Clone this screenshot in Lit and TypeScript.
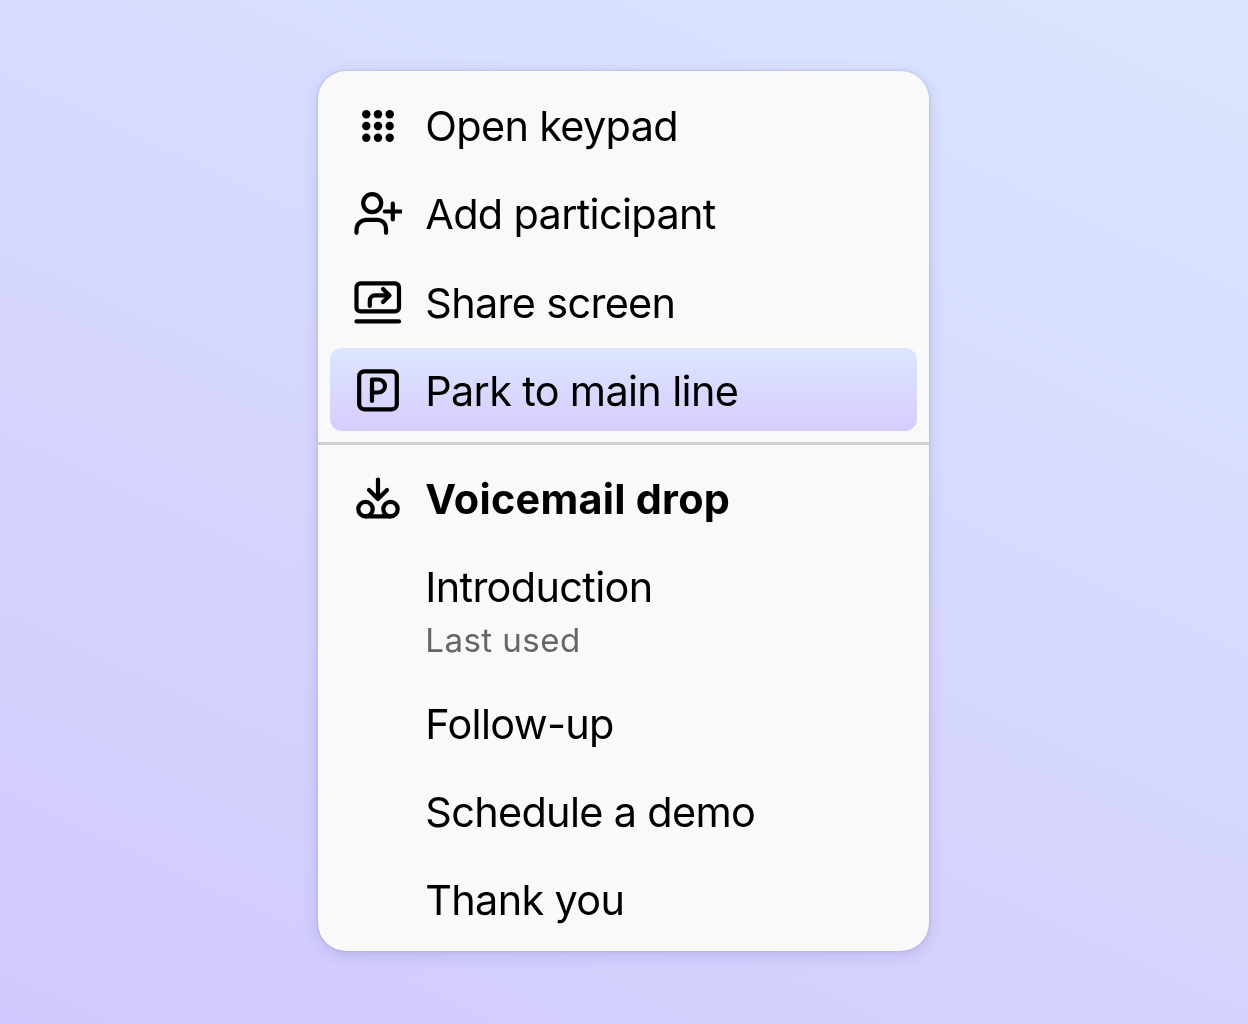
import { LitElement, html, css, svg } from "lit";
import { customElement } from "lit/decorators.js";

const icons = {
  keypad: svg`<g fill="currentColor" stroke="none" transform="translate(0 1)">
    ${[12.3, 24, 35.7].flatMap((y) =>
      [12.3, 24, 35.7].map((x) => svg`<circle cx=${x} cy=${y} r="4.2"></circle>`),
    )}
  </g>`,
  addUser: svg`<g transform="translate(0 0.8)">
    <circle cx="18.2" cy="13.3" r="9"></circle>
    <path d="M2.5 43v-3a10 10 0 0 1 10-10h11.5a8.5 8.5 0 0 1 8 8.5v4.5"></path>
    <path d="M30.8 21.7h16M38.8 13.7v16"></path>
  </g>`,
  share: svg`<g transform="translate(0 0.4)">
    <rect x="2.5" y="5" width="42.5" height="28" rx="4"></rect>
    <path d="M2.5 43H45"></path>
    <path d="M15.8 27.5v-5.5a5 5 0 0 1 5-5H35"></path>
    <path d="M29 10.5l6.5 6.5l-6.5 6.5"></path>
  </g>`,
  park: svg`<rect x="5.2" y="5.3" width="37.6" height="38" rx="5"></rect>
    <path d="M18 35V13.5h6.5a6.5 6.5 0 0 1 0 13H18"></path>`,
  voicemail: svg`<g transform="translate(0 1.1)">
    <path d="M24 4.5V23"></path>
    <path d="M15 15l9 9l9-9"></path>
    <circle cx="11.5" cy="34" r="7.2"></circle>
    <circle cx="36.5" cy="34" r="7.2"></circle>
    <path d="M11.5 41.2h25"></path>
  </g>`,
};

type IconName = keyof typeof icons;

interface MenuItem {
  label: string;
  icon?: IconName;
  sub?: string;
  active?: boolean;
  bold?: boolean;
}

const topItems: MenuItem[] = [
  { label: "Open keypad", icon: "keypad" },
  { label: "Add participant", icon: "addUser" },
  { label: "Share screen", icon: "share" },
  { label: "Park to main line", icon: "park", active: true },
];

const voicemailItems: MenuItem[] = [
  { label: "Voicemail drop", icon: "voicemail", bold: true },
  { label: "Introduction", sub: "Last used" },
  { label: "Follow-up" },
  { label: "Schedule a demo" },
  { label: "Thank you" },
];

@customElement("app-root")
export class AppRoot extends LitElement {
  static styles = css`
    :host {
      display: flex;
      justify-content: center;
      align-items: flex-start;
      box-sizing: border-box;
      height: 1024px;
      padding: 71px 1px 0 0;
      background: linear-gradient(205deg, #dbe6ff 0%, #d1c9fd 100%);
      font-family: Inter, "Liberation Sans", sans-serif;
      color: #000;
    }

    .menu {
      box-sizing: border-box;
      width: 611px;
      height: 880px;
      padding: 12.4px 12px 9.5px;
      background: #f9f9f9;
      border-radius: 28px;
      box-shadow:
        0 0 3px rgba(80, 80, 150, 0.3),
        0 4px 16px rgba(80, 80, 150, 0.18);
      will-change: transform;
    }

    .group {
      display: flex;
      flex-direction: column;
      gap: 5px;
    }

    .group.top {
      gap: 5.33px;
    }

    .divider {
      height: 3px;
      margin: 11px -12px;
      background: #cfcfcf;
    }

    .row {
      display: flex;
      align-items: center;
      gap: 23.5px;
      height: 83px;
      padding-left: 23.75px;
      border-radius: 12px;
    }

    .row.tall {
      height: 132px;
      align-items: flex-start;
    }

    .row.active {
      background: linear-gradient(180deg, #dce6ff 0%, #d6cdfe 100%);
    }

    .slot {
      flex: none;
      width: 48px;
      height: 48px;
    }

    svg {
      display: block;
      width: 48px;
      height: 48px;
      fill: none;
      stroke: currentColor;
      stroke-width: 4.2;
      stroke-linecap: round;
      stroke-linejoin: round;
    }

    .label {
      padding-top: 3.2px;
      font-size: 41.4px;
      line-height: 83px;
      letter-spacing: -0.66px;
      white-space: nowrap;
    }

    .row.tall .label {
      padding-top: 1.6px;
    }

    .row.bold .label {
      font-weight: 700;
      letter-spacing: 0.25px;
    }

    .sub {
      margin-top: -12.5px;
      font-size: 33.1px;
      line-height: 48px;
      letter-spacing: 0.45px;
      color: #666;
      white-space: nowrap;
    }
  `;

  private renderRow(item: MenuItem) {
    const classes = [
      "row",
      item.active ? "active" : "",
      item.bold ? "bold" : "",
      item.sub ? "tall" : "",
    ].join(" ");
    return html`
      <div class=${classes}>
        <div class="slot">
          ${item.icon
            ? html`<svg viewBox="0 0 48 48">${icons[item.icon]}</svg>`
            : ""}
        </div>
        <div>
          <div class="label">${item.label}</div>
          ${item.sub ? html`<div class="sub">${item.sub}</div>` : ""}
        </div>
      </div>
    `;
  }

  render() {
    return html`
      <div class="menu">
        <div class="group top">${topItems.map((i) => this.renderRow(i))}</div>
        <div class="divider"></div>
        <div class="group">${voicemailItems.map((i) => this.renderRow(i))}</div>
      </div>
    `;
  }
}
